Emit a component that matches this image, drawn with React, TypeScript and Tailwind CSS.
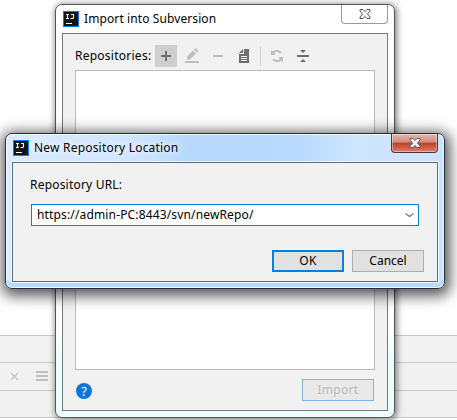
import React from "react";

function AppIcon() {
  return (
    <svg width="16" height="16" viewBox="0 0 16 16" className="shrink-0">
      <rect width="16" height="16" fill="#087cfa" />
      <rect x="1" y="1" width="14" height="14" fill="#141414" />
      <path d="M3 3.5h3M4.5 3.5v4M3 7.5h3M8 3.5h3M10.5 3v3.5q0 1-1 1H7.5" stroke="#fff" strokeWidth="1.1" fill="none" />
      <path d="M3 12.5h6" stroke="#fff" />
    </svg>
  );
}

function CloseGlyph() {
  return (
    <svg width="12" height="10" viewBox="0 0 12 10">
      <path d="M1 .5h3L6 2.5 8 .5h3v1.5L8.5 5 11 8v1.5H8L6 7.500 4 9.500H1V8l2.500-3L1 2z" fill="#f4f4f6" stroke="#55576d" strokeWidth="1" />
    </svg>
  );
}

function Toolbar() {
  return (
    <div className="flex h-[22px] items-center">
      <span className="w-[80px] whitespace-nowrap text-[12px] leading-[22px] tracking-[0.25px]">Repositories:</span>
      <span className="flex h-[22px] w-[22px] items-center justify-center bg-[#cfcfcf]">
        <svg width="16" height="16"><path d="M3 8h10M8 3v10" stroke="#6e6e6e" strokeWidth="2" /></svg>
      </span>
      <svg className="ml-[7px]" width="16" height="16">
        <path d="M1 14h14" stroke="#bdbdbd" strokeWidth="2" />
        <path d="M3 11.500v-3l6-6 3 3-6 6zM10 1.500l1.500-1.500 3 3L13 4.500z" fill="#bdbdbd" />
      </svg>
      <svg className="ml-[10px]" width="16" height="16"><path d="M3 8h10" stroke="#bdbdbd" strokeWidth="2" /></svg>
      <svg className="ml-[10px]" width="16" height="16">
        <path d="M8 1h5v14H3V6h5z" fill="#6e6e6e" />
        <path d="M3 5l4-4v4z" fill="#6e6e6e" />
        <path d="M5 8.5h6M5 10.5h6M5 12.5h6" stroke="#f1f1f1" />
      </svg>
      <span className="ml-[8px] h-5 w-px bg-[#cecece]" />
      <svg className="ml-[8px]" width="16" height="16">
        <path d="M3 7a5 5 0 0 1 8.8-2.2M13 9a5 5 0 0 1-8.800 2.200" stroke="#bdbdbd" strokeWidth="2" fill="none" />
        <path d="M2 2v5h5zM14 14V9H9z" fill="#bdbdbd" />
      </svg>
      <svg className="ml-[10px]" width="16" height="16">
        <path d="M2 8h12" stroke="#6e6e6e" strokeWidth="2" />
        <path d="M5 2h6L8 5zM5 14h6l-3-3z" fill="#6e6e6e" />
      </svg>
    </div>
  );
}

function ImportWindow() {
  return (
    <section className="absolute left-[55px] top-[4px] flex h-[414px] w-[340px] flex-col rounded-[7px] border border-[#555] bg-gradient-to-b from-white from-80% to-[#edfffe] to-85% px-[6px] pb-[6px] shadow-[1px_1px_6px_1px_rgba(0,0,0,0.5)]">
      <header className="flex h-[28px] shrink-0 items-start justify-between">
        <div className="flex items-center pl-[1px] pt-[6px]">
          <AppIcon />
          <h1 className="ml-[5px] whitespace-nowrap text-[12px] leading-4 tracking-[0.1px]">Import into Subversion</h1>
        </div>
        <button className="flex h-[19px] w-[47px] items-center justify-center rounded-b-[4px] border border-t-0 border-[#999] bg-white"><CloseGlyph /></button>
      </header>
      <div className="flex min-h-0 flex-1 flex-col border border-[#777] bg-[#f1f1f1] px-[12px] pt-[11px]">
        <Toolbar />
        <div className="mt-[3px] h-[300px] w-[300px] shrink-0 border border-[#bdbdbd] bg-white" />
        <footer className="mt-[9px] flex items-center justify-between pr-px">
          <span className="ml-[1px] mt-[2px] flex h-4 w-4 items-center justify-center rounded-full bg-[#0b76d8] text-[13px] leading-4 text-white">?</span>
          <button className="h-[22px] w-[72px] border border-[#7ab8e8] bg-[#e9e9e9] text-[12px] leading-[20px] tracking-[0.3px] text-[#b9b9b9]">Import</button>
        </footer>
      </div>
    </section>
  );
}

function LocationWindow() {
  return (
    <section className="absolute left-[5px] top-[133px] flex h-[156px] w-[440px] flex-col rounded-[7px] border border-[#222e3c] bg-[linear-gradient(90deg,#d9ebff_0px,#cfe5ff_130px,#b5d8fc_185px,#b7dafd_290px,#cfe5fd_350px,#cbe3fc_440px)] px-[6px] pb-[6px] shadow-[inset_0_0_0_1px_rgba(255,255,255,0.8),inset_0_-6px_0_0_#b9dafb,1px_3px_14px_4px_rgba(0,0,0,0.65)]">
      <header className="flex h-[28px] shrink-0 items-start justify-between">
        <div className="flex items-center pl-[1px] pt-[6px]">
          <AppIcon />
          <h2 className="ml-[5px] whitespace-nowrap text-[12px] leading-4 tracking-[0.2px] [text-shadow:0_0_8px_white,0_0_8px_white]">New Repository Location</h2>
        </div>
        <button className="flex h-[19px] w-[47px] items-center justify-center rounded-b-[4px] border border-t-0 border-[#592e37] bg-[linear-gradient(#e5b5aa_0%,#d58c7d_45%,#bd4029_50%,#d98069_100%)] shadow-[inset_0_0_0_1px_rgba(255,255,255,0.4)]"><CloseGlyph /></button>
      </header>
      <div className="flex min-h-0 flex-1 flex-col border border-[#5c6b7d] bg-[#f1f1f1] pl-[18px] pr-[13px] pt-[11px] shadow-[0_0_0_1px_rgba(255,255,255,0.7)]">
        <label className="-ml-px whitespace-nowrap text-[12px] leading-[22px] tracking-[0.2px]">Repository URL:</label>
        <div className="mt-[8px] flex h-[22px] w-[388px] items-center justify-between border border-[#0a80d8] bg-white pl-[5px] pr-[4px]">
          <span className="whitespace-nowrap text-[12px] leading-5 tracking-[0.15px]">https://admin-PC:8443/svn/newRepo/</span>
          <svg width="9" height="5"><path d="M.5.5l4 3 4-3" fill="none" stroke="#777" strokeWidth="1.2" /></svg>
        </div>
        <div className="mt-[24px] flex justify-end gap-2">
          <button className="h-[22px] w-[72px] border-2 border-[#0a80d8] bg-[#e1e1e1] text-[12px] leading-[18px] tracking-[0.3px]">OK</button>
          <button className="h-[22px] w-[72px] border border-[#adadad] bg-[#e1e1e1] text-[12px] leading-[20px]">Cancel</button>
        </div>
      </div>
    </section>
  );
}

export default function App() {
  return (
    <main className="relative flex h-[420px] w-[457px] flex-col overflow-hidden bg-white pt-[335px] font-['Noto_Sans',sans-serif] text-black">
      <div className="h-[27px] shrink-0 border-t border-[#c9c9c9] bg-[#f2f2f2]" />
      <div className="flex h-[28px] shrink-0 items-center border-t border-[#c9c9c9] bg-[#f1f1f1] pl-[10px]">
        <svg width="9" height="9"><path d="M1 1l7 7M8 1L1 8" stroke="#c2c2c2" strokeWidth="1.2" /></svg>
        <svg className="ml-[17px] -mt-[2px]" width="12" height="12"><path d="M0 2h12M0 6h12M0 10h12" stroke="#bdbdbd" strokeWidth="2" /></svg>
      </div>
      <div className="h-[27px] shrink-0 border-t border-[#c9c9c9] bg-[#f1f1f1]" />
      <div className="flex-1 border-t border-[#c9c9c9] bg-white" />
      <ImportWindow />
      <LocationWindow />
    </main>
  );
}
